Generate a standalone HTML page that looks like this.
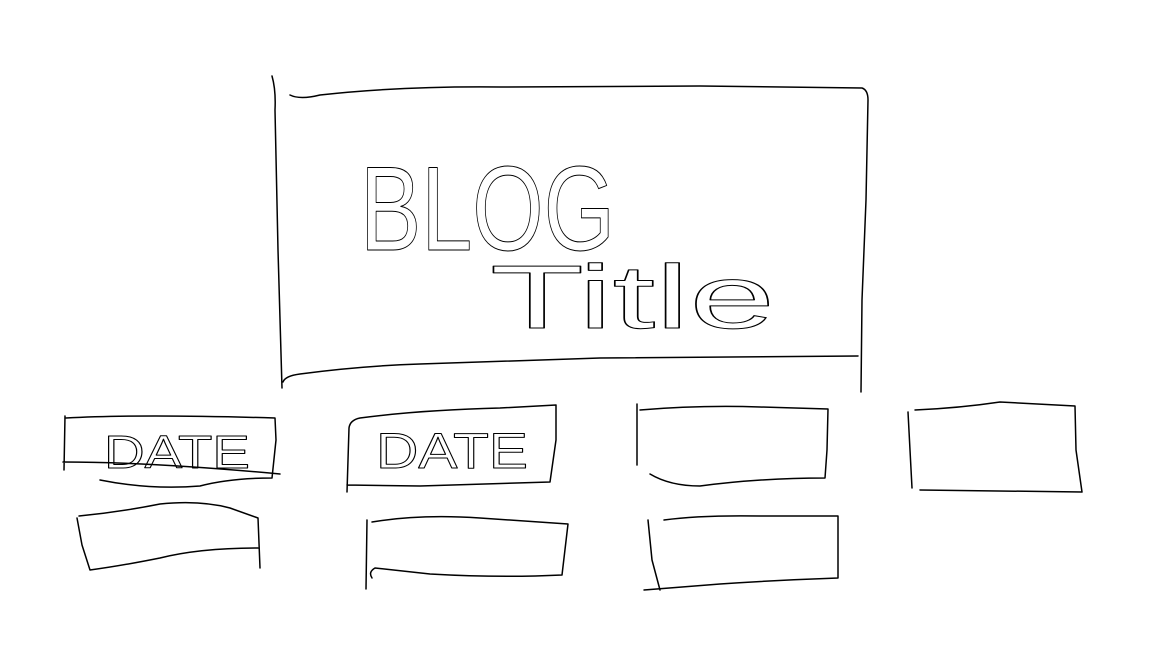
<!DOCTYPE html>
<html><head><meta charset="utf-8"><style>
html,body{margin:0;padding:0;background:#fff;width:1152px;height:648px;overflow:hidden}
svg{display:block}
text{font-family:"Liberation Sans",sans-serif;fill:none;stroke:#000;stroke-width:1}
</style></head><body>
<svg width="1152" height="648" viewBox="0 0 1152 648" fill="none" stroke="#000" stroke-width="1.5" stroke-linecap="round" stroke-linejoin="round">
<path d="M272,76 Q276,90 275,110 L278,250 L282,388"/>
<path d="M290,95 Q300,100 320,95 Q400,86 500,87 L700,86 L862,88 Q868,90 868,100 L866,200 L862,300 L861,392"/>
<path d="M283,382 Q285,376 300,374 Q360,366 420,364 L600,358 L858,356"/>
<text x="360" y="250" font-size="120" textLength="255" lengthAdjust="spacingAndGlyphs">BLOG</text>
<text x="490" y="328" font-size="90" textLength="285" lengthAdjust="spacingAndGlyphs">Title</text>
<path d="M65,416 L64,470 M63,462 Q150,462 280,474 M66,418 Q140,414 275,418 L276,440 L272,478 Q230,478 200,486 Q150,490 100,480"/>
<text x="104" y="468" font-size="46" textLength="146" lengthAdjust="spacingAndGlyphs">DATE</text>
<path d="M347,492 L349,428 Q350,420 360,418 Q420,410 500,408 L556,405 L556,440 L550,482 Q480,484 420,486 L347,485"/>
<text x="376" y="468" font-size="50" textLength="152" lengthAdjust="spacingAndGlyphs">DATE</text>
<path d="M637,404 L637,465 M640,410 Q700,405 760,407 L828,409 L827,450 L825,478 Q760,478 700,486 Q670,486 650,474"/>
<path d="M908,412 L910,450 L912,488 M915,410 Q960,408 1000,402 L1075,406 L1076,450 L1082,492 L920,490"/>
<path d="M79,516 Q120,512 160,504 Q200,500 230,508 L258,518 L260,568 M77,518 L82,545 L90,570 Q120,566 160,558 Q200,548 258,548"/>
<path d="M367,520 L366,589 M372,522 Q420,514 480,518 L568,524 L562,575 Q500,578 430,574 L375,568 Q368,572 372,578"/>
<path d="M648,520 L652,560 L660,590 M664,520 Q700,515 760,516 L838,516 L838,578 Q780,580 720,584 L644,590"/>
</svg>
</body></html>
